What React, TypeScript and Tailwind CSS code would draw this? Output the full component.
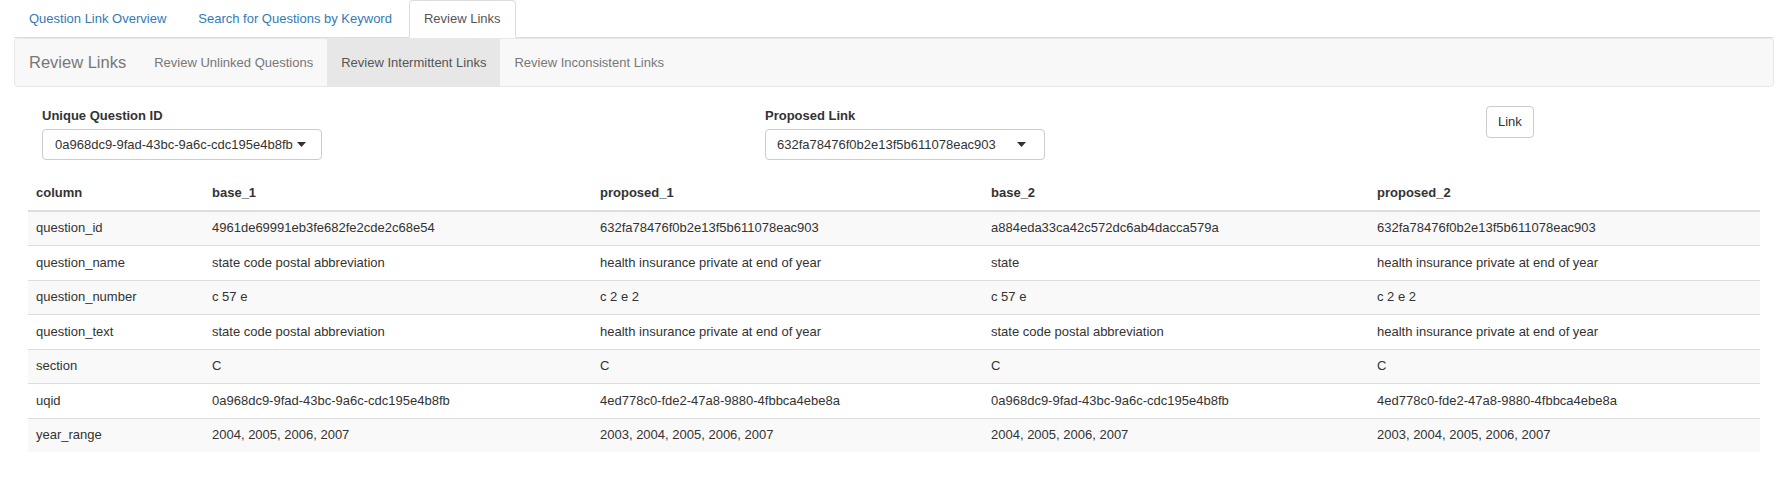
import React from "react";

const rows: string[][] = [
  ["question_id", "4961de69991eb3fe682fe2cde2c68e54", "632fa78476f0b2e13f5b611078eac903", "a884eda33ca42c572dc6ab4dacca579a", "632fa78476f0b2e13f5b611078eac903"],
  ["question_name", "state code postal abbreviation", "health insurance private at end of year", "state", "health insurance private at end of year"],
  ["question_number", "c 57 e", "c 2 e 2", "c 57 e", "c 2 e 2"],
  ["question_text", "state code postal abbreviation", "health insurance private at end of year", "state code postal abbreviation", "health insurance private at end of year"],
  ["section", "C", "C", "C", "C"],
  ["uqid", "0a968dc9-9fad-43bc-9a6c-cdc195e4b8fb", "4ed778c0-fde2-47a8-9880-4fbbca4ebe8a", "0a968dc9-9fad-43bc-9a6c-cdc195e4b8fb", "4ed778c0-fde2-47a8-9880-4fbbca4ebe8a"],
  ["year_range", "2004, 2005, 2006, 2007", "2003, 2004, 2005, 2006, 2007", "2004, 2005, 2006, 2007", "2003, 2004, 2005, 2006, 2007"],
];

const headers = ["column", "base_1", "proposed_1", "base_2", "proposed_2"];
const widths = ["w-[176px]", "w-[388px]", "w-[391px]", "w-[386px]", "w-[391px]"];

function Caret() {
  return (
    <svg width="9" height="5" viewBox="0 0 9 5" className="shrink-0">
      <path d="M0 0 L9 0 L4.5 5 Z" fill="#333" />
    </svg>
  );
}

export default function App() {
  return (
    <div className="min-h-screen bg-white px-[14px] font-['Liberation_Sans',Arial,sans-serif] text-[13px] text-[#333]">
      {/* Top tabs */}
      <ul className="flex border-b border-[#ddd]">
        <li className="-mb-px mr-[2px]">
          <a className="block rounded-t-[4px] border border-transparent px-[14px] py-[9px] leading-[18px] text-[#337ab7]">
            Question Link Overview
          </a>
        </li>
        <li className="-mb-px mr-[2px]">
          <a className="block rounded-t-[4px] border border-transparent px-[14px] py-[9px] leading-[18px] text-[#337ab7]">
            Search for Questions by Keyword
          </a>
        </li>
        <li className="-mb-px mr-[2px]">
          <a className="block rounded-t-[4px] border border-[#ddd] border-b-transparent bg-white px-[14px] py-[9px] leading-[18px] text-[#555]">
            Review Links
          </a>
        </li>
      </ul>

      {/* Navbar */}
      <div className="flex h-[49px] items-stretch rounded-[4px] border border-[#e7e7e7] bg-[#f8f8f8]">
        <span className="flex items-center px-[14px] text-[16.5px] text-[#777]">Review Links</span>
        <a className="flex items-center px-[14px] text-[#777]">Review Unlinked Questions</a>
        <a className="flex items-center bg-[#e7e7e7] px-[14px] text-[#555]">Review Intermittent Links</a>
        <a className="flex items-center px-[14px] text-[#777]">Review Inconsistent Links</a>
      </div>

      {/* Form */}
      <div className="mt-[19px] grid grid-cols-[723px_721px_1fr] pl-[28px]">
        <div>
          <div className="mb-[4px] font-bold leading-[19px]">Unique Question ID</div>
          <div className="flex h-[31px] w-[280px] items-center rounded-[4px] border border-[#ccc] bg-white pl-[12px]">
            <span className="leading-[18px]">0a968dc9-9fad-43bc-9a6c-cdc195e4b8fb</span>
            <span className="ml-[4px] flex items-center">
              <Caret />
            </span>
          </div>
        </div>
        <div>
          <div className="mb-[4px] font-bold leading-[19px]">Proposed Link</div>
          <div className="flex h-[31px] w-[280px] items-center justify-between rounded-[4px] border border-[#ccc] bg-white pl-[11px] pr-[18px]">
            <span className="leading-[18px]">632fa78476f0b2e13f5b611078eac903</span>
            <Caret />
          </div>
        </div>
        <div>
          <button className="h-[32px] rounded-[4px] border border-[#ccc] bg-white px-[11px] leading-[18px] text-[#333]">
            Link
          </button>
        </div>
      </div>

      {/* Table */}
      <table className="mx-[14px] mt-[16px] w-[1732px] table-fixed border-collapse text-left">
        <colgroup>
          {widths.map((w, i) => (
            <col key={i} className={w} />
          ))}
        </colgroup>
        <thead>
          <tr>
            {headers.map((h) => (
              <th key={h} className="border-b-2 border-[#ddd] px-[8px] py-[7.5px] font-bold leading-[18.5px]">
                {h}
              </th>
            ))}
          </tr>
        </thead>
        <tbody>
          {rows.map((r, i) => (
            <tr key={i} className={i % 2 === 0 ? "bg-[#f9f9f9]" : "bg-white"}>
              {r.map((c, j) => (
                <td key={j} className="border-t border-[#ddd] px-[8px] py-[7.5px] leading-[18.5px]">
                  {c}
                </td>
              ))}
            </tr>
          ))}
        </tbody>
      </table>
    </div>
  );
}
